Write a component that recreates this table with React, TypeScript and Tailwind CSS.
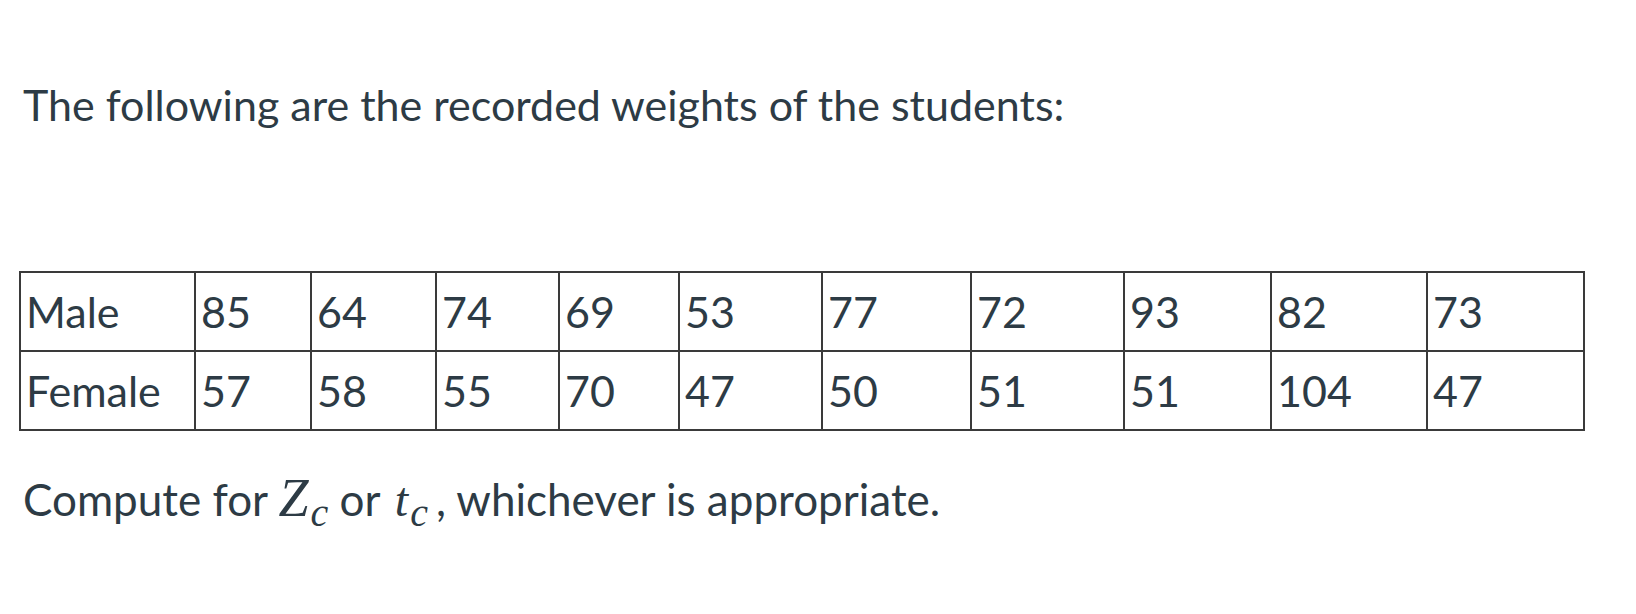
const male = ["85", "64", "74", "69", "53", "77", "72", "93", "82", "73"];
const female = ["57", "58", "55", "70", "47", "50", "51", "51", "104", "47"];
const widths = ["w-[175px]", "w-[116px]", "w-[125px]", "w-[123px]", "w-[120px]", "w-[143px]", "w-[149px]", "w-[153px]", "w-[147px]", "w-[156px]", "w-[157px]"];

export default function App() {
  const cell = "border-2 border-[#3a3a3a] px-[5px] h-[79px] align-middle text-left font-normal";
  return (
    <div className="w-[1636px] h-[614px] bg-white text-[#2d3b45] font-['Lato','Liberation_Sans',sans-serif] pl-[19px]">
      <p className="pt-[79px] pl-[4px] text-[43px] leading-[52px]">
        The following are the recorded weights of the students:
      </p>

      <table className="mt-[140px] border-collapse table-fixed text-[43px] leading-[52px]">
        <tbody>
          <tr>
            <td className={`${cell} ${widths[0]}`}>Male</td>
            {male.map((v, i) => (
              <td key={i} className={`${cell} ${widths[i + 1]}`}>{v}</td>
            ))}
          </tr>
          <tr>
            <td className={`${cell} ${widths[0]}`}>Female</td>
            {female.map((v, i) => (
              <td key={i} className={`${cell} ${widths[i + 1]}`}>{v}</td>
            ))}
          </tr>
        </tbody>
      </table>

      {/* math bits roughly like MathJax output */}
      <p className="mt-[40px] pl-[4px] text-[44px] leading-[54px]">
        Compute for{" "}
        <span className="font-['Liberation_Serif',serif] italic leading-none">
          <span className="text-[54px] tracking-[2px]">Z</span>
          <span className="text-[40px] align-[-0.25em]">c</span>
        </span>{" "}
        or{" "}
        <span className="font-['Liberation_Serif',serif] italic leading-none">
          <span className="text-[48px] ml-[4px]">t</span>
          <span className="text-[40px] align-[-0.25em] ml-[2px]">c</span>
        </span>
        <span className="ml-[8px]">,</span> whichever is appropriate.
      </p>
    </div>
  );
}
